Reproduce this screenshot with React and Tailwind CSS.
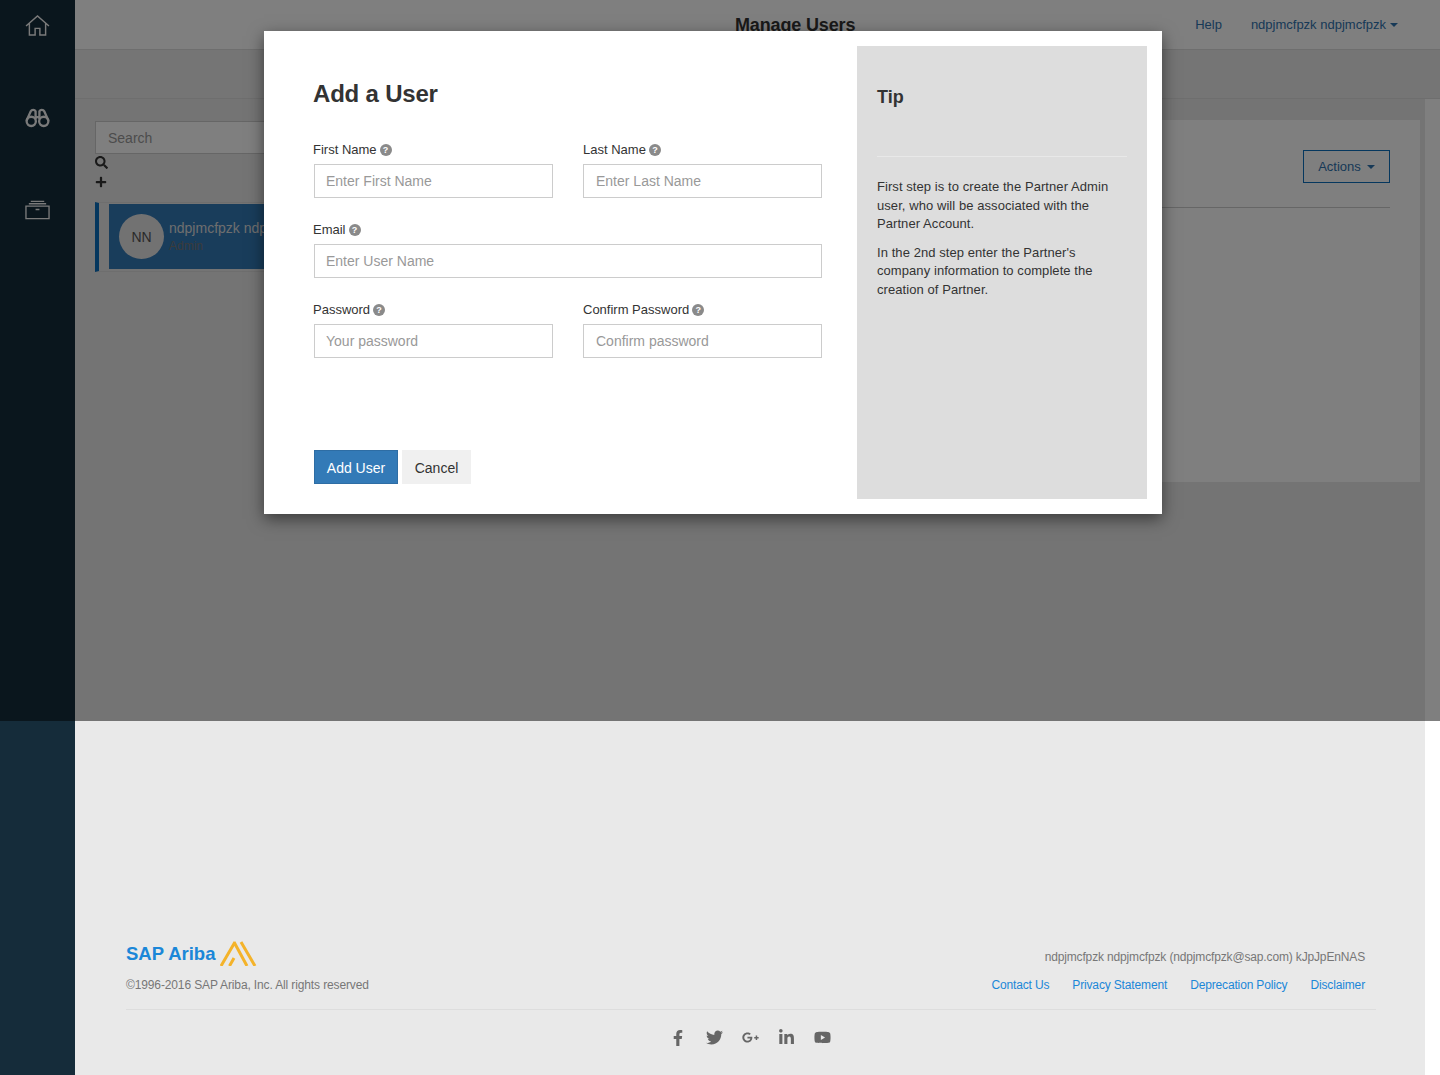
import React from 'react';
import { FaFacebookF, FaTwitter, FaGooglePlusG, FaLinkedinIn, FaYoutube, FaSearch, FaPlus } from 'react-icons/fa';

const HelpDot = () => (
  <span className="ml-[3px] flex w-3 h-3 rounded-full bg-[#8a8a8a] text-white text-[9px] font-bold leading-none items-center justify-center">?</span>
);

const Field = ({ label, placeholder, className = '', right = false }) => (
  <div className={className}>
    <div className={right ? 'h-[18px] flex items-center text-[13px] leading-[18px] text-[#333]' : 'h-[18px] flex items-center text-[13px] leading-[18px] text-[#333] -ml-px'}>{label}<HelpDot /></div>
    <input
      placeholder={placeholder}
      className={right
        ? 'mt-[5px] block w-full h-[34px] border border-[#ccc] pl-3 pr-3 text-sm text-[#555] placeholder:text-[#999] outline-none bg-white'
        : 'mt-[5px] block w-full h-[34px] border border-[#ccc] pl-[11px] pr-3 text-sm text-[#555] placeholder:text-[#999] outline-none bg-white'}
    />
  </div>
);

const HomeIcon = () => (
  <svg width="25" height="21" viewBox="0 0 26 22" fill="none" stroke="#f5f5f5" strokeWidth="1.5">
    <path d="M1 11.500 13 1l12 10.500M4.500 9v12h6v-7h5v7h6V9" />
  </svg>
);

const BinocularsIcon = () => (
  <svg width="25" height="20" viewBox="0 0 26 20" fill="none" stroke="#f5f5f5" strokeWidth="2.4">
    <path d="M1.500 13 6 3c1-2 4-2 5 0v8M24.500 13 20 3c-1-2-4-2-5 0v8M11 9h4" />
    <circle cx="6.500" cy="13.500" r="4.800" />
    <circle cx="19.500" cy="13.500" r="4.800" />
  </svg>
);

const ArchiveIcon = () => (
  <svg width="25" height="20" viewBox="0 0 26 20" fill="none" stroke="#f5f5f5" strokeWidth="1.4">
    <path d="M1 6h24v13H1zM4 3.500h18M6 1h14M11 9.500h4" />
  </svg>
);

const AribaMark = () => (
  <svg width="37" height="25" viewBox="0 0 37 25" fill="none" stroke="#f4b32a" strokeWidth="3" className="ml-[2px] -mt-[2px]">
    <path d="M1 25 15 1M14 1l13 24M21 1l14 24M9.500 25l4.500-8" />
  </svg>
);

export default function App() {
  return (
    <div className="relative flex w-full h-[1075px] bg-white overflow-hidden font-['Liberation_Sans',Arial,sans-serif]">
      <aside className="w-[75px] shrink-0 bg-[#152c3a] flex flex-col items-center pt-[15px] gap-[72px]">
        <HomeIcon />
        <BinocularsIcon />
        <ArchiveIcon />
      </aside>

      <div className="flex-1 flex flex-col min-w-0">
        <header className="relative h-[50px] shrink-0 bg-white border-b border-[#ddd]">
          <div className="absolute left-[660px] top-[15px] text-lg font-bold leading-[20px] tracking-[-0.15px] text-[#333]">Manage Users</div>
          <div className="h-full flex items-center justify-end gap-[29px] pr-[42px] text-[13px] text-[#2f72ae]">
            <span>Help</span>
            <span className="flex items-center gap-[4px]">ndpjmcfpzk ndpjmcfpzk <span className="border-x-4 border-x-transparent border-t-4 border-t-[#2f72ae] mt-px" /></span>
          </div>
        </header>
        <div className="h-[49px] shrink-0 bg-[#ebebeb] border-b border-[#ddd]" />

        <div className="flex-1 flex">
          <main className="w-[1350px] bg-[#e9e9e9] flex flex-col">
            <div className="flex gap-5 pl-5 pr-[5px] pt-[21px]">
              <section className="w-[230px] shrink-0 mt-px">
                <div className="h-[33px] border border-[#ccc] bg-white flex items-center px-3 text-sm text-[#999] w-[300px]">Search</div>
                <FaSearch size={13} className="text-[#333] mt-[2px]" />
                <FaPlus size={12} className="text-[#333] mt-[7px]" />
                <div className="mt-[14px] h-[70px] border-l-4 border-[#0a6ebd] border-y border-y-[#ddd] pl-[10px] py-px">
                  <div className="h-[65px] bg-[#337ab7] flex items-center pl-[10px] gap-[5px] w-[300px]">
                    <div className="w-[45px] h-[45px] rounded-full bg-[#e4e4e4] flex items-center justify-center text-sm text-[#555]">NN</div>
                    <div className="mt-[2px]">
                      <div className="text-sm leading-[18px] text-[#ddd] whitespace-nowrap">ndpjmcfpzk ndpjmcfpzk</div>
                      <div className="text-xs leading-[19px] text-[#777]">Admin</div>
                    </div>
                  </div>
                </div>
              </section>
              <section className="flex-1 h-[362px] bg-white pt-[30px] pr-[30px]">
                <div className="flex justify-end h-[58px] border-b border-[#ccc]">
                  <div className="w-[87px] h-[33px] border border-[#0a6ebd] flex items-center justify-center gap-[6px] text-[13px] text-[#2f72ae]">
                    Actions <span className="border-x-4 border-x-transparent border-t-4 border-t-[#2f72ae] mt-px" />
                  </div>
                </div>
              </section>
            </div>

            <footer className="mt-auto pl-[51px] pr-[49px] pb-[29px] text-xs text-[#777]">
              <div className="flex justify-between items-start">
                <div>
                  <div className="flex items-center gap-[3px] h-[28px]">
                    <span className="text-[18.5px] leading-none font-bold text-[#1b87d8]">SAP Ariba</span>
                    <AribaMark />
                  </div>
                  <div className="mt-[10px] leading-[14px] tracking-[-0.13px]">©1996-2016 SAP Ariba, Inc. All rights reserved</div>
                </div>
                <div className="pr-[11px] text-right pt-[10px]">
                  <div className="leading-[14px] tracking-[-0.15px]">ndpjmcfpzk ndpjmcfpzk (ndpjmcfpzk@sap.com) kJpJpEnNAS</div>
                  <div className="mt-[14px] leading-[14px] flex justify-end gap-[23px] text-[#1b87d8] tracking-[-0.15px]">
                    <span>Contact Us</span>
                    <span>Privacy Statement</span>
                    <span>Deprecation Policy</span>
                    <span>Disclaimer</span>
                  </div>
                </div>
              </div>
              <div className="mt-[17px] border-t border-[#ddd] pt-[19px] pr-[2px] flex justify-center items-center text-[#666]">
                <span className="w-9 flex justify-center"><FaFacebookF size={16} /></span>
                <span className="w-9 flex justify-center"><FaTwitter size={17} /></span>
                <span className="w-9 flex justify-center"><FaGooglePlusG size={17} /></span>
                <span className="w-9 flex justify-center"><FaLinkedinIn size={17} /></span>
                <span className="w-9 flex justify-center"><FaYoutube size={17} /></span>
              </div>
            </footer>
          </main>
          <div className="flex-1 bg-white" />
        </div>
      </div>

      {/* Backdrop stops at the first viewport height */}
      <div className="absolute inset-x-0 top-0 h-[721px] bg-black/50" />

      {/* Modal */}
      <div className="absolute left-[264px] top-[31px] w-[898px] h-[483px] bg-white p-[15px] flex shadow-[0_5px_15px_rgba(0,0,0,0.5)]">
        <div className="w-[508px] ml-[35px] flex flex-col">
          <h2 className="mt-[34px] h-[28px] -ml-px text-2xl leading-[28px] font-bold tracking-[-0.2px] text-[#333]">Add a User</h2>
          <div className="mt-[33px] grid grid-cols-2 gap-x-[30px] gap-y-[23px]">
            <Field label="First Name" placeholder="Enter First Name" />
            <Field label="Last Name" placeholder="Enter Last Name" right />
            <Field label="Email" placeholder="Enter User Name" className="col-span-2" />
            <Field label="Password" placeholder="Your password" />
            <Field label="Confirm Password" placeholder="Confirm password" right />
          </div>
          <div className="mt-[92px] flex gap-1">
            <button className="w-[84px] h-[34px] pt-px bg-[#337ab7] border border-[#2e6da4] text-white text-sm">Add User</button>
            <button className="w-[69px] h-[34px] pt-px bg-[#f0f0f0] text-[#333] text-sm">Cancel</button>
          </div>
        </div>
        <aside className="ml-[35px] w-[290px] h-[453px] bg-[#ddd] px-5">
          <h3 className="mt-[40px] h-[22px] text-lg leading-[22px] font-bold text-[#333]">Tip</h3>
          <div className="mt-[48px] border-t border-[#e8e8e8] pt-[21px] text-[13px] leading-[18.5px] tracking-[0.07px] text-[#333]">
            <p>First step is to create the Partner Admin user, who will be associated with the Partner Account.</p>
            <p className="mt-[10px]">In the 2nd step enter the Partner's company information to complete the creation of Partner.</p>
          </div>
        </aside>
      </div>
    </div>
  );
}
